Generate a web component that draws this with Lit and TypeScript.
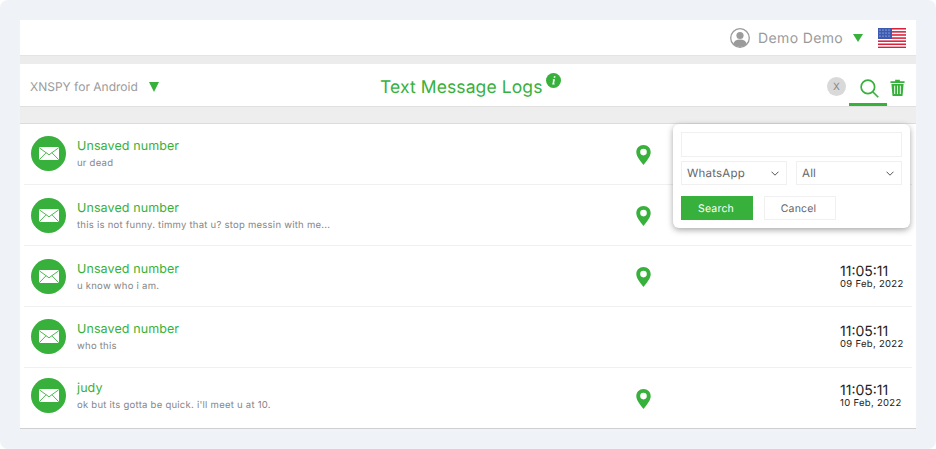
import { LitElement, html, css, svg } from "lit";
import { customElement } from "lit/decorators.js";

const rows = [
  { name: "Unsaved number", msg: "ur dead", pin: true, date: "09 Feb, 2022" },
  { name: "Unsaved number", msg: "this is not funny. timmy that u? stop messin with me...", pin: true, date: "09 Feb, 2022" },
  { name: "Unsaved number", msg: "u know who i am.", pin: true, date: "09 Feb, 2022" },
  { name: "Unsaved number", msg: "who this", pin: false, date: "09 Feb, 2022" },
  { name: "judy", msg: "ok but its gotta be quick. i'll meet u at 10.", pin: true, date: "10 Feb, 2022" },
];

const caret = html`<svg class="caret" viewBox="0 0 12 10" preserveAspectRatio="none"><path d="M0 0H12L6 10Z" fill="#38b03c"/></svg>`;
const chev = html`<svg width="8" height="5" viewBox="0 0 8 5" fill="none"><path d="M.5.7L4 4.200 7.500.7" stroke="#555" stroke-width="1"/></svg>`;

const flagStripes = [0, 1, 2, 3, 4, 5, 6].map(
  (i) => svg`<rect x="0" y="${i * 3.1}" width="28" height="1.55" fill="#d8213a"/>`
);

@customElement("app-root")
export class AppRoot extends LitElement {
  static styles = css`
    :host { display: block; width: 936px; height: 449px; font-family: Inter, "Liberation Sans", sans-serif; background: #fff; text-rendering: geometricPrecision; }
    * { box-sizing: border-box; }
    .page { position: relative; width: 936px; height: 449px; background: #eff2f7; border-radius: 8px; padding: 20px 20px 0; }
    .wrap { width: 896px; background: #ececec; }
    .top { height: 36px; background: #fff; display: flex; align-items: center; justify-content: flex-end; padding-right: 10px; border-bottom: 1px solid #e4e4e4; }
    .user { color: #9a9a9a; font-size: 14px; margin-left: 8px; margin-top: 2px; letter-spacing: 0.35px; }
    .top .caret { width: 10px; height: 8px; margin-left: 10px; margin-right: 15px; }
    .sub { margin-top: 8px; height: 43px; padding-top: 3px; background: #fff; display: flex; align-items: center; position: relative; border-bottom: 1px solid #e0e0e0; }
    .sub .caret { width: 10px; height: 10px; }
    .app { margin-left: 10px; color: #9b9b9b; font-size: 12px; width: 119px; }
    .title { position: absolute; left: 360px; top: 13px; color: #38b03c; font-size: 17.5px; font-weight: 400; letter-spacing: 0.1px; white-space: nowrap; display: flex; }
    .title svg { margin-left: 3px; margin-top: -4px; }
    .tools { margin-left: auto; display: flex; align-items: center; height: 100%; padding-right: 11px; }
    .x { width: 19px; height: 19px; border-radius: 50%; background: #d9d9d9; color: #888; font-size: 10px; display: flex; align-items: center; justify-content: center; margin-right: 3px; }
    .search { width: 38px; height: 100%; border-bottom: 3px solid #38b03c; display: flex; align-items: center; justify-content: center; padding-top: 6px; padding-left: 3px; }
    .trash { margin-left: 3px; margin-top: 2px; display: block; }
    .gap { height: 17px; background: #eeeeee; border-bottom: 1px solid #dcdcdc; }
    .list { background: #fff; border-bottom: 1px solid #cfcfcf; height: 305px; }
    .row { --o: 0px; height: 61px; margin: 0 4px; border-bottom: 1px solid #f0f0f0; display: flex; align-items: flex-start; padding-left: 7px; }
    .row:nth-child(2), .row:nth-child(3) { --o: 1px; }
    .row:nth-child(5) { --o: -2px; border-bottom: none; height: 60px; }
    .avatar { width: 35px; height: 35px; margin-top: calc(12px + var(--o)); border-radius: 50%; background: #38b03c; display: flex; align-items: center; justify-content: center; flex: none; }
    .info { margin-left: 11px; width: 559px; flex: none; margin-top: calc(15px + var(--o)); }
    .name { color: #38b03c; font-size: 12.5px; line-height: 16px; letter-spacing: 0.1px; }
    .msg { color: #858585; font-size: 9.5px; line-height: 13px; margin-top: 2px; letter-spacing: 0.25px; white-space: nowrap; }
    .pin { width: 15px; flex: none; display: flex; margin-top: 21px; }
    .time { margin-left: 189px; color: #222; margin-top: calc(16.500px + var(--o)); white-space: nowrap; }
    .clock { font-size: 14px; line-height: 15px; }
    .date { font-size: 9.5px; line-height: 12px; letter-spacing: 0.3px; }
    .pop { position: absolute; left: 673px; top: 124px; width: 237px; height: 104px; background: #fff; border-radius: 6px; box-shadow: 0 2px 6px rgba(0,0,0,0.35); padding: 8px; }
    .input { width: 221px; height: 25px; border: 1px solid #f0f0f0; display: block; }
    .selects { display: flex; justify-content: space-between; margin-top: 4px; }
    .sel { height: 24px; border: 1px solid #f0f0f0; display: flex; align-items: center; justify-content: space-between; padding: 0 7px 0 5px; font-size: 11.5px; color: #666; letter-spacing: 0.2px; }
    .s1, .s2 { width: 106px; }
    .btns { display: flex; margin-top: 11px; }
    .btn { width: 72px; height: 24px; display: flex; align-items: center; justify-content: center; font-size: 10.5px; letter-spacing: 0.2px; padding-right: 2px; }
    .go { background: #38b03c; color: #fff; }
    .cancel { margin-left: 11px; border: 1px solid #f0f0f0; color: #666; padding-right: 3px; }
  `;

  render() {
    return html`<div class="page">
      <div class="wrap">
        <div class="top">
          <svg width="20" height="20" viewBox="0 0 20 20">
            <circle cx="10" cy="10" r="9.300" fill="#fff" stroke="#9b9b9b" stroke-width="1.300"/>
            <circle cx="10" cy="7.500" r="3.600" fill="#9b9b9b"/>
            <path d="M3.200 16c.8-3 3.400-4.400 6.800-4.400s6 1.400 6.800 4.400A9 9 0 0 1 10 19a9 9 0 0 1-6.800-3z" fill="#9b9b9b"/>
          </svg>
          <span class="user">Demo Demo</span>
          ${caret}
          <svg width="28" height="20" viewBox="0 0 28 20">
            <rect width="28" height="20" fill="#fff"/>
            ${flagStripes}
            <rect width="14" height="11" fill="#3c5bb0"/>
            ${[2, 5, 8, 11].flatMap((x) => [2, 5, 8].map((y) => svg`<circle cx="${x}" cy="${y}" r="0.6" fill="#dfe6f8"/>`))}
          </svg>
        </div>
        <div class="sub">
          <span class="app">XNSPY for Android</span>
          ${caret}
          <div class="title">Text Message Logs
            <svg width="15" height="15" viewBox="0 0 14 14"><circle cx="7" cy="7" r="7" fill="#38b03c"/><path d="M7.400 3.100h1.500l-.3 1.400H7.100zM6.500 5.800h1.900l-.9 4h.7l-.2 1H5.800l.9-4h-.5z" fill="#fff"/></svg>
          </div>
          <div class="tools">
            <div class="x">X</div>
            <div class="search">
              <svg width="19" height="19" viewBox="0 0 20 20" fill="none" stroke="#38b03c" stroke-width="1.800"><circle cx="8.300" cy="8.300" r="7.100"/><path d="M13.400 13.400L19.200 19.200"/></svg>
            </div>
            <svg class="trash" width="15" height="17" viewBox="0 0 16 18" fill="#38b03c"><path d="M5.500 0.800h5v1.500h5v2H0.500v-2h5zM1.500 5.200h13l-1.100 12.200a1 1 0 0 1-1 .6H3.600a1 1 0 0 1-1-.6z"/><path d="M5 7v9M8 7v9M11 7v9" stroke="#fff" stroke-width="1"/></svg>
          </div>
        </div>
        <div class="gap"></div>
        <div class="list">
          ${rows.map(
            (r) => html`<div class="row">
              <div class="avatar">
                <svg width="20" height="13" viewBox="0 0 20 13"><rect width="20" height="13" rx="1" fill="#fff"/><path d="M0.300 0.800L10 7.800 19.700 0.800M0.300 12.700L7 5.800M19.700 12.700L13 5.800" fill="none" stroke="#38b03c" stroke-width="0.900"/></svg>
              </div>
              <div class="info">
                <div class="name">${r.name}</div>
                <div class="msg">${r.msg}</div>
              </div>
              <div class="pin">
                ${r.pin
                  ? html`<svg width="15" height="20" viewBox="0 0 15 20"><path fill-rule="evenodd" fill="#38b03c" d="M7.500 0C3.400 0 0.300 3.100 0.300 7.200c0 4.800 5.700 10.500 7.200 12.800 1.500-2.300 7.200-8 7.200-12.800C14.700 3.100 11.600 0 7.500 0zM7.500 3.800a3.300 3.300 0 1 1 0 6.600 3.300 3.300 0 0 1 0-6.600z"/></svg>`
                  : ""}
              </div>
              <div class="time">
                <div class="clock">11:05:11</div>
                <div class="date">${r.date}</div>
              </div>
            </div>`
          )}
        </div>
      </div>
      <div class="pop">
        <div class="input"></div>
        <div class="selects">
          <div class="sel s1"><span>WhatsApp</span>${chev}</div>
          <div class="sel s2"><span>All</span>${chev}</div>
        </div>
        <div class="btns">
          <div class="btn go">Search</div>
          <div class="btn cancel">Cancel</div>
        </div>
      </div>
    </div>`;
  }
}
